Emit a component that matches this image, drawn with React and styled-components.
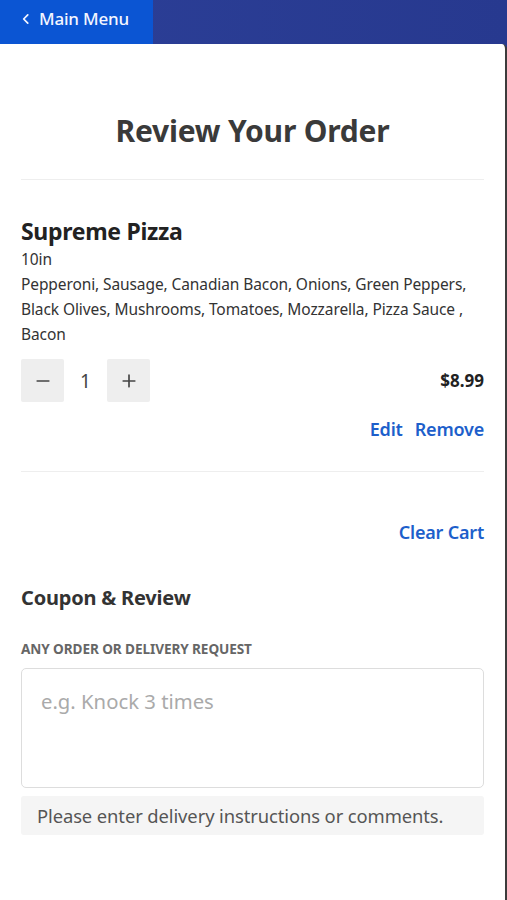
import React from 'react';
import styled, { createGlobalStyle } from 'styled-components';

const GlobalStyle = createGlobalStyle`
  html, body {
    margin: 0;
    padding: 0;
    background: #fff;
  }
  body {
    font-family: "Noto Sans", "Open Sans", sans-serif;
    color: #333;
  }
  * { box-sizing: border-box; }
`;

const Page = styled.div`
  width: 507px;
  height: 900px;
  display: flex;
  flex-direction: column;
  overflow: hidden;
  background: linear-gradient(90deg, #2c3f97 0%, #27398f 100%);
`;

const TopBar = styled.div`
  height: 44px;
  display: flex;
  flex-shrink: 0;
`;

const BackButton = styled.button`
  width: 153px;
  height: 44px;
  border: none;
  background: #0b55d3;
  color: #f4f6ff;
  display: flex;
  align-items: center;
  gap: 6px;
  padding: 0 0 7px 19px;
  font-family: inherit;
  font-size: 17px;
  font-weight: 500;
  letter-spacing: -0.2px;
  svg { flex-shrink: 0; }
`;

const Sheet = styled.div`
  flex: 1;
  width: 507px;
  background: #fff;
  border-top-right-radius: 5px;
  border-right: 2px solid #3c3c3c;
  padding: 0 21px 0 21px;
  display: flex;
  flex-direction: column;
`;

const Title = styled.h1`
  margin: 0;
  padding: 66px 0 0;
  height: 135px;
  text-align: center;
  font-size: 30px;
  font-weight: 700;
  color: #3a3a3a;
  letter-spacing: -0.2px;
`;

const Divider = styled.hr`
  border: none;
  border-top: 1px solid #eeeeee;
  margin: 0;
`;

const Item = styled.section`
  padding: 35px 0 30px;
`;

const ItemName = styled.h2`
  margin: 0;
  font-size: 23px;
  font-weight: 700;
  color: #222;
  line-height: 32px;
  letter-spacing: -0.3px;
`;

const ItemText = styled.p`
  margin: 0;
  font-size: 15.5px;
  line-height: 25px;
  color: #333;
  letter-spacing: -0.1px;
`;

const QtyRow = styled.div`
  display: flex;
  align-items: center;
  margin-top: 12px;
`;

const QtyButton = styled.button`
  width: 43px;
  height: 43px;
  border: none;
  border-radius: 2px;
  background: #eeeeee;
  display: flex;
  align-items: center;
  justify-content: center;
  padding: 0;
`;

const Qty = styled.span`
  width: 43px;
  text-align: center;
  font-size: 19px;
  color: #444;
`;

const Price = styled.span`
  margin-left: auto;
  font-size: 17px;
  font-weight: 700;
  color: #222;
`;

const Actions = styled.div`
  display: flex;
  justify-content: flex-end;
  gap: 12px;
  margin-top: 15px;
`;

const LinkButton = styled.button`
  border: none;
  background: none;
  padding: 0;
  font-family: inherit;
  font-size: 18px;
  font-weight: 600;
  color: #1d5fcb;
  letter-spacing: -0.2px;
`;

const ClearRow = styled.div`
  display: flex;
  justify-content: flex-end;
  align-items: flex-start;
  padding-top: 48px;
  height: 112px;
`;

const SectionTitle = styled.h3`
  margin: 0;
  font-size: 20px;
  font-weight: 700;
  color: #333;
  letter-spacing: -0.2px;
`;

const FieldLabel = styled.label`
  display: block;
  margin-top: 28px;
  font-size: 13.6px;
  font-weight: 700;
  color: #666;
  text-transform: uppercase;
  letter-spacing: -0.1px;
`;

const TextArea = styled.textarea`
  display: block;
  width: 100%;
  height: 120px;
  margin-top: 10px;
  border: 1px solid #dddddd;
  border-radius: 5px;
  padding: 18px 19px;
  resize: none;
  font-family: inherit;
  font-size: 20.3px;
  color: #333;
  &::placeholder { color: #aaa; }
`;

const Hint = styled.div`
  margin-top: 8px;
  height: 39px;
  background: #f5f5f5;
  border-radius: 3px;
  padding: 0 16px;
  display: flex;
  align-items: center;
  font-size: 18.4px;
  color: #555;
  letter-spacing: -0.1px;
`;

const Icon = ({ d, size = 20, stroke = '#444', width = 2 }) => (
  <svg width={size} height={size} viewBox="0 0 24 24" fill="none" stroke={stroke} strokeWidth={width} strokeLinecap="round" strokeLinejoin="round">
    <path d={d} />
  </svg>
);

export default function App() {
  return (
    <>
      <GlobalStyle />
      <Page>
        <TopBar>
          <BackButton>
            <Icon d="M15 5l-7 7 7 7" size={14} stroke="#f4f6ff" width={3} />
            Main Menu
          </BackButton>
        </TopBar>
        <Sheet>
          <Title>Review Your Order</Title>
          <Divider />
          <Item>
            <ItemName>Supreme Pizza</ItemName>
            <ItemText>10in</ItemText>
            <ItemText>
              Pepperoni, Sausage, Canadian Bacon, Onions, Green Peppers, Black Olives, Mushrooms, Tomatoes, Mozzarella, Pizza Sauce , Bacon
            </ItemText>
            <QtyRow>
              <QtyButton aria-label="decrease"><Icon d="M5 12h14" /></QtyButton>
              <Qty>1</Qty>
              <QtyButton aria-label="increase"><Icon d="M12 5v14M5 12h14" /></QtyButton>
              <Price>$8.99</Price>
            </QtyRow>
            <Actions>
              <LinkButton>Edit</LinkButton>
              <LinkButton>Remove</LinkButton>
            </Actions>
          </Item>
          <Divider />
          <ClearRow>
            <LinkButton>Clear Cart</LinkButton>
          </ClearRow>
          <SectionTitle>Coupon &amp; Review</SectionTitle>
          <FieldLabel>Any order or delivery request</FieldLabel>
          <TextArea placeholder="e.g. Knock 3 times" />
          <Hint>Please enter delivery instructions or comments.</Hint>
        </Sheet>
      </Page>
    </>
  );
}
